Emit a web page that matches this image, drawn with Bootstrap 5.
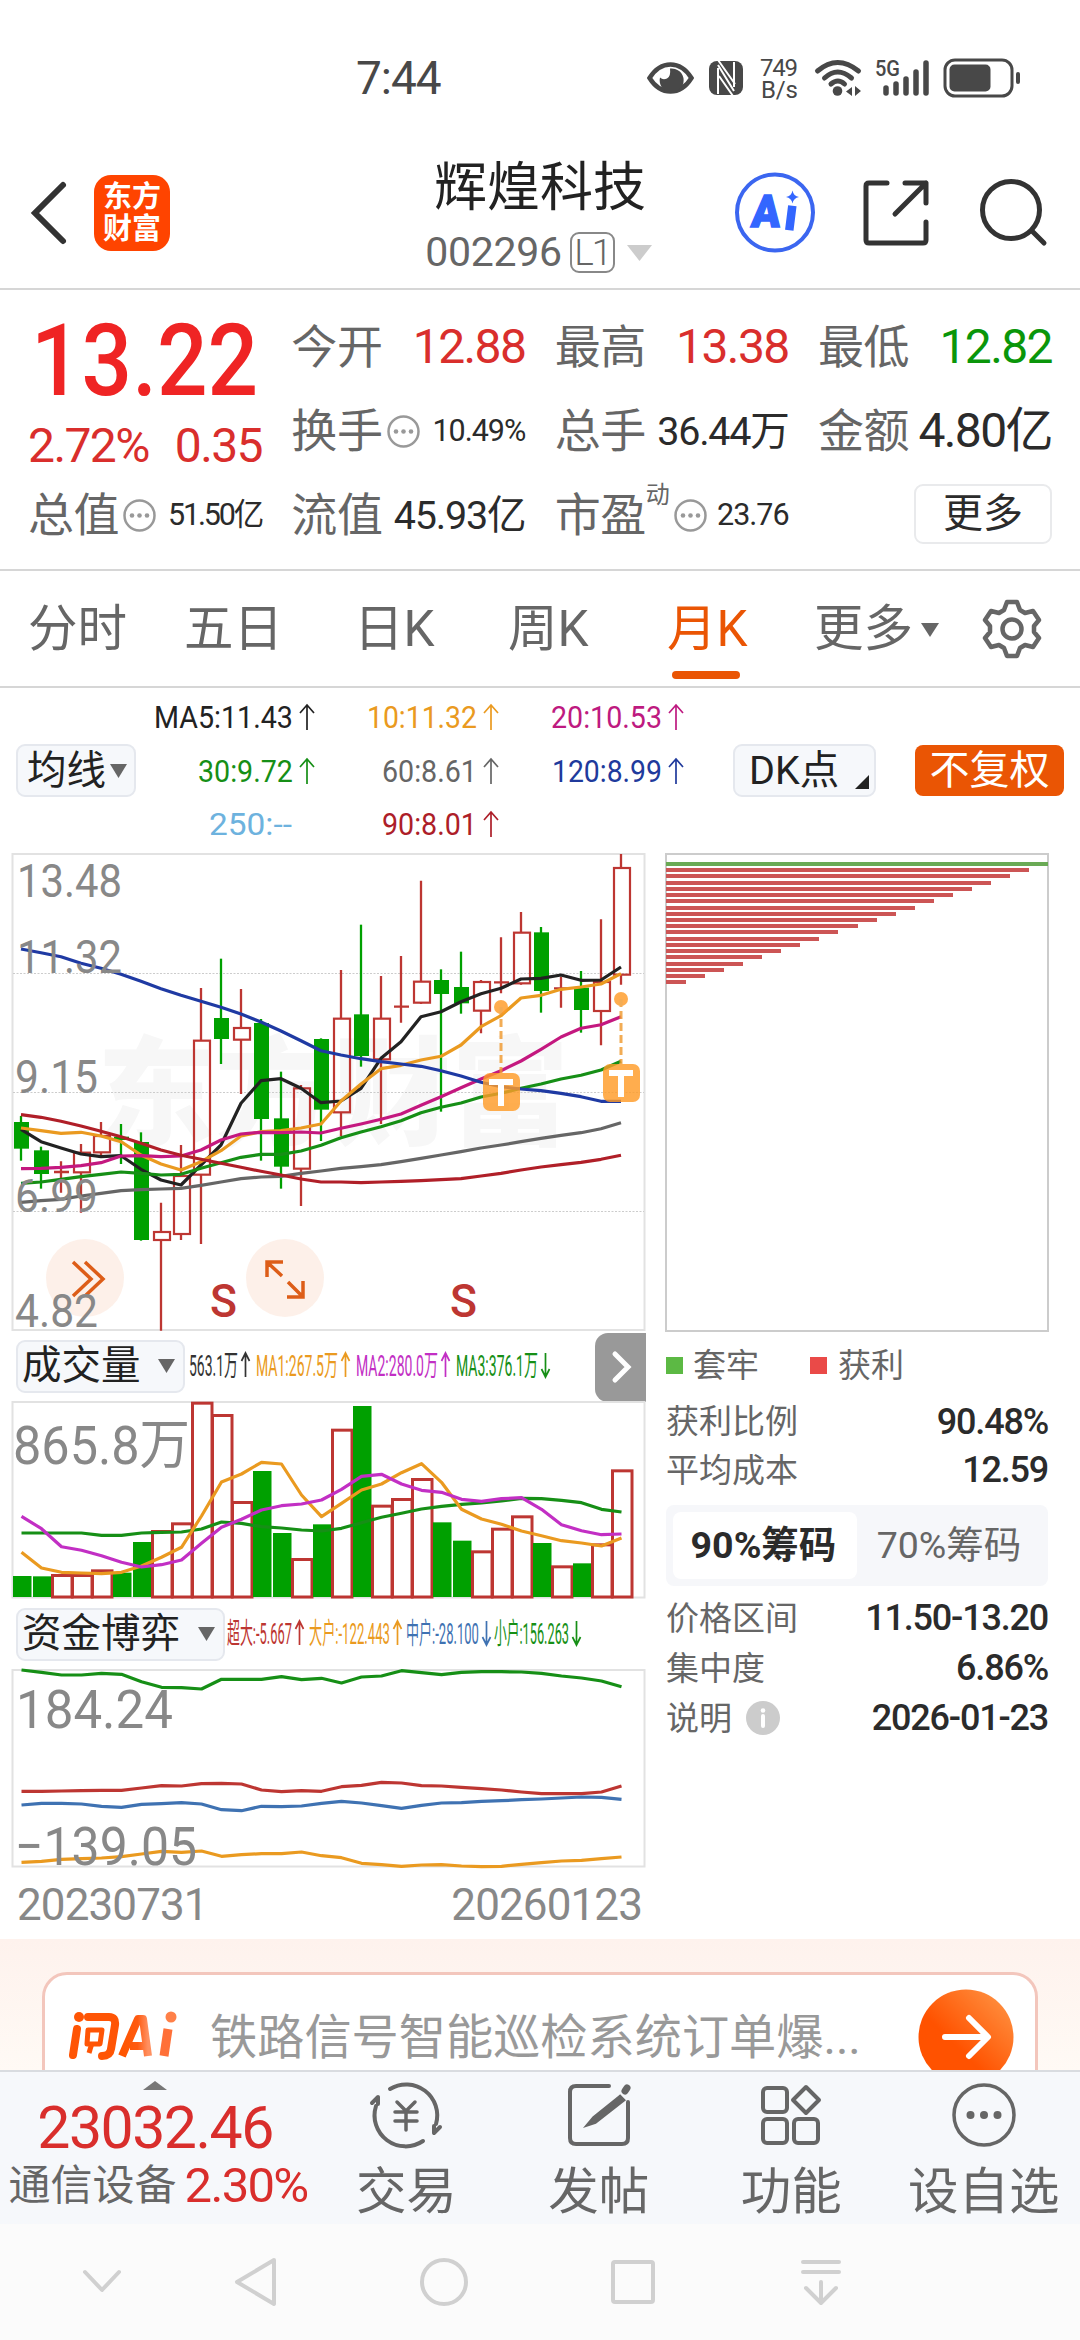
<!DOCTYPE html>
<html lang="zh-CN">
<head>
<meta charset="utf-8">
<meta name="viewport" content="width=device-width, initial-scale=1">
<title>辉煌科技 002296</title>
<link href="https://cdn.jsdelivr.net/npm/bootstrap@5.3.0/dist/css/bootstrap.min.css" rel="stylesheet">
<style>
:root{--up:#d92e2c;--brand:#ea5504;--ink:#2b2b2b;--dim:#666;--line:#d6d6d6}
html,body{width:1080px;height:2340px;overflow:hidden}
body{font-family:Roboto,"Noto Sans CJK SC",sans-serif;color:var(--ink);background:#fff;line-height:1}
svg{display:block;flex:none;overflow:visible}
svg text{font-family:Roboto,"Noto Sans CJK SC",sans-serif}
.c-up{color:var(--up)}.c-down{color:#0a960a}.c-dim{color:var(--dim)}
.status-bar{height:130px;padding:26px 0 0 356px}
.clock{font-size:46px;letter-spacing:-1px;color:#484848;width:288px;flex:none}
.title-bar{height:160px;padding:8px 31px 0;border-bottom:2px solid var(--line)}
.app-logo{width:76px;height:76px;border-radius:17px;background:#ff4400;color:#fff;font-weight:700;font-size:29px;line-height:32px;margin-left:27px}
.stock-name{font-size:53px;color:#222}
.stock-code{font-size:41px;letter-spacing:-.3px;color:var(--dim);margin-top:17px}
.lvl{width:45px;height:41px;border:2px solid #888;border-radius:9px;font-size:37px;font-weight:300;margin-left:8px;letter-spacing:-2px}
.name-box{width:340px;padding-top:9px;margin-left:200px}
.quote{height:281px;padding:0 28px;border-bottom:2px solid var(--line)}
.q-col{width:234px;padding-top:15px}
.q-cell{height:84.2px}
.q-label{font-size:46px;letter-spacing:-.4px;color:var(--dim)}
.v47{font-size:48px;letter-spacing:-1.6px}.v39{font-size:39.5px;letter-spacing:-1.2px}.v30{font-size:30.5px;letter-spacing:-1px}
.tight{letter-spacing:-2.2px}
.v46{font-size:48px;letter-spacing:-1.6px}
.big-price{font-size:100px;font-weight:500;color:#ef2424;height:112px;padding:21px 0 0 3px}
.big-price>span{display:inline-block;transform:scaleX(.89);transform-origin:0 50%}
.q-more{width:138px;height:60px;border:2px solid #e9eaec;border-radius:9px;font-size:40px;margin-top:-3px}
.dyn{font-size:24px;margin-top:-40px}
.h-pct{height:87px}.h-cap{height:52px}
.k-tabs{height:117px;padding-left:28px;border-bottom:2px solid var(--line);font-size:49.5px;color:var(--dim)}
.k-tabs>div{height:118px;width:156px}
.k-tabs>div:nth-child(2){width:170px}.k-tabs>div:nth-child(3){width:154px}.k-tabs>div:nth-child(4){width:159px}.k-tabs>div:nth-child(5){width:147px}.k-tabs>div:nth-child(6){width:168px}
.k-tabs .on{color:var(--brand)}
.k-tabs .on::after{content:"";position:absolute;left:5px;bottom:10px;width:68px;height:8px;border-radius:4px;background:var(--brand)}
.ma-bar{height:165px;padding:0 16px}
.pill{height:53px;border:2px solid #e5e8ee;border-radius:9px;background:#f6f8fb;color:#222;font-size:39.5px;white-space:nowrap;flex:none;padding:0 8px 0 4px}
.pill-ma{width:120px;padding-left:9px}.pill-vol{width:169px}.pill-fund{width:209px}
.pill-dk{width:143px;margin-left:17px;padding-left:14px}
.corner{right:5px;bottom:6px}
.fq{width:149px;height:51px;border-radius:8px;background:#ea5504;color:#fff;font-size:40px;flex:none}
.charts{height:1086px}
.left-col{width:646px}
.head-row{height:70px;padding-left:16px}
.nxt{width:51px;height:69px;border-radius:13px 0 0 13px;background:#999;margin-top:2px}
.dates{height:72px;padding:15px 4px 0 17px;font-size:44px;letter-spacing:-.9px;color:#888}
.right-col{width:382px;margin-left:20px}
.chips{height:479px;border:2px solid #ccc;width:384px;margin-left:-1px;padding-top:7px}
.chip{height:4px;margin-bottom:2.22px;background:#cc5555;margin-left:-1px}
.chip.lose{background:#6aaa55}
.sq{width:17px;height:17px}
.sq-g{background:#5cb944;margin-right:10px}.sq-r{background:#ea4a48;margin:0 11px 0 51px}
.r-row{height:50px}.r-row.first{height:47px}.r-legend{height:66px}
.r-label{font-size:33px;color:var(--dim)}
.r-val{font-size:36px;font-weight:500;letter-spacing:-1.2px}
.seg{height:81px;background:#f6f7fa;border-radius:8px;padding:7px;font-size:37.5px;margin:10px 0 7px}
.seg>div{height:67px;border-radius:8px}
.seg-on{width:184px;padding-right:3px}
.ask{height:131px;background:linear-gradient(#fef2ed,#fffaf5);padding:33px 42px 0}
.ask-box{height:160px;border:3px solid #f3c6bc;border-radius:25px;background:#fff}
.ask-logo{margin:33px 0 0 21px}
.ask-text{font-size:47.2px;color:#999;padding-top:40px;margin-left:30px;width:704px;white-space:nowrap}
.ask-go{margin:14px 0 0 4px}
.tool-bar{height:154px;border-top:2px solid #d9dce0;background:#f6f8fb;font-size:50.5px;color:var(--dim)}
.idx{width:311px}.idx-tri{margin-top:9px}
.idx-v{font-size:59px;letter-spacing:-1.5px;margin-top:8px}.idx-n{font-size:42px;margin-top:4px;padding-left:6px}.idx-p{font-size:49px;letter-spacing:-1.7px}
.tool{width:193px}.tool>svg{margin:9px 0 18px}
.sys-nav{height:116px;background:#fbfbfb}
</style>
</head>
<body>
<div class="status-bar d-flex align-items-center">
  <div class="clock">7:44</div>
  <svg width="380" height="48" viewBox="644 54 380 48" fill="#484848">
    <path d="M649.500 78Q658 64.500 670.500 64.500Q683 64.500 691.500 78Q683 91.500 670.500 91.500Q658 91.500 649.500 78Z" fill="none" stroke="#484848" stroke-width="4.500"/>
    <path d="M670 68.500a12 12 0 1 1-10 9q3 3 7 1t3-10Z"/>
    <rect x="709" y="61" width="34" height="34" rx="8"/>
    <path d="M718 94V68M718 65 734 91M734 62V87M719 76 733 96M718 60 735 84" fill="none" stroke="#fff" stroke-width="2"/>
    <text x="760" y="76" font-size="24" textLength="38">749</text>
    <text x="761" y="98" font-size="24" textLength="37">B/s</text>
    <g fill="none" stroke="#484848" stroke-width="5" stroke-linecap="round"><path d="M817.500 71q20-17 41 0"/><path d="M824.500 78q13-12 27 0"/><path d="M831 84q7-6 13.500 0"/></g>
    <circle cx="837.500" cy="91" r="4.800"/><path d="M852 87v9l-6-4.500ZM855 86v10l6-5Z"/>
    <text x="875" y="76" font-size="22" font-weight="500" textLength="25" lengthAdjust="spacingAndGlyphs">5G</text>
    <path d="M886 88v5M896 84v9M906 79v14M916 72v21M926 63v30" stroke="#484848" stroke-width="5.500" stroke-linecap="round"/>
    <rect x="945" y="60" width="67" height="36" rx="10" fill="none" stroke="#484848" stroke-width="3"/>
    <rect x="949.500" y="64.500" width="41" height="27" rx="5"/><rect x="1016" y="72" width="4" height="12" rx="2"/>
  </svg>
</div>

<header class="title-bar d-flex align-items-center">
  <svg width="36" height="62" viewBox="0 0 36 62"><path d="M32 3 4 31 32 59" fill="none" stroke="#333" stroke-width="6" stroke-linecap="round"/></svg>
  <div class="app-logo d-flex flex-column align-items-center justify-content-center"><span>东方</span><span>财富</span></div>
  <div class="name-box d-flex flex-column align-items-center">
    <div class="stock-name">辉煌科技</div>
    <div class="stock-code d-flex align-items-center"><span>002296</span><span class="lvl d-flex align-items-center justify-content-center">L1</span>
      <svg class="ms-2" width="32" height="18"><path d="M4 1h25L16.500 17Z" fill="#ccc"/></svg></div>
  </div>
  <svg class="ms-auto" width="320" height="90" viewBox="729 169 320 90">
    <circle cx="775" cy="213.500" r="38" fill="none" stroke="#3b66f0" stroke-width="4"/>
    <text transform="translate(750.500 227.500) skewX(-5) scale(.94 1)" x="0" y="0" font-size="45" font-weight="900" fill="#3366ff" stroke="#3366ff" stroke-width="1.500">A</text>
    <path d="M791.800 211l-2 16" stroke="#3366ff" stroke-width="8.500" stroke-linecap="square"/>
    <path d="M792.500 191.500q1 5.500 6.500 6.500-5.500 1-6.500 6.500-1-5.500-6.500-6.500 5.500-1 6.500-6.500Z" fill="#3366ff"/>
    <g fill="none" stroke="#333" stroke-width="5" stroke-linecap="round" stroke-linejoin="round"><path d="M887 184H869Q866 184 866 187V241Q866 244 869 244H923Q926 244 926 241V223M905 184H926V204M926 184 895 215"/><circle cx="1011" cy="211" r="28.500"/><path d="M1032 232 1044 244"/></g>
  </svg>
</header>

<section class="quote d-flex justify-content-between">
  <div class="q-col pt-0">
    <div class="big-price"><span>13.22</span></div>
    <div class="h-pct d-flex justify-content-between align-items-center c-up v47"><span>2.72%</span><span>0.35</span></div>
    <div class="h-cap d-flex align-items-center"><span class="q-label">总值</span><svg class="me-auto ms-1" width="33" height="33"><use href="#dots"/></svg><span class="v30 tight">51.50亿</span></div>
  </div>
  <div class="q-col">
    <div class="q-cell d-flex align-items-center justify-content-between"><span class="q-label">今开</span><span class="v47 c-up">12.88</span></div>
    <div class="q-cell d-flex align-items-center"><span class="q-label">换手</span><svg class="me-auto ms-1" width="33" height="33"><use href="#dots"/></svg><span class="v30">10.49%</span></div>
    <div class="q-cell d-flex align-items-center justify-content-between"><span class="q-label">流值</span><span class="v39">45.93亿</span></div>
  </div>
  <div class="q-col">
    <div class="q-cell d-flex align-items-center justify-content-between"><span class="q-label">最高</span><span class="v47 c-up">13.38</span></div>
    <div class="q-cell d-flex align-items-center justify-content-between"><span class="q-label">总手</span><span class="v39">36.44万</span></div>
    <div class="q-cell d-flex align-items-center"><span class="q-label">市盈</span><span class="dyn c-dim">动</span><svg class="me-auto ms-1" width="33" height="33"><use href="#dots"/></svg><span class="v30">23.76</span></div>
  </div>
  <div class="q-col">
    <div class="q-cell d-flex align-items-center justify-content-between"><span class="q-label">最低</span><span class="v47 c-down">12.82</span></div>
    <div class="q-cell d-flex align-items-center justify-content-between"><span class="q-label">金额</span><span class="v46">4.80亿</span></div>
    <div class="q-cell d-flex align-items-center justify-content-end"><div class="q-more d-flex align-items-center justify-content-center">更多</div></div>
  </div>
</section>

<nav class="k-tabs d-flex">
  <div class="d-flex align-items-center">分时</div><div class="d-flex align-items-center">五日</div><div class="d-flex align-items-center">日K</div><div class="d-flex align-items-center">周K</div>
  <div class="on d-flex align-items-center position-relative">月K</div>
  <div class="d-flex align-items-center">更多<svg class="ms-2" width="18" height="14"><path d="M0 0h18L9 14Z" fill="#666"/></svg></div>
  <svg class="align-self-center" width="60" height="60" viewBox="-30 -30 60 60"><g fill="none" stroke="#666" stroke-width="4.500" stroke-linejoin="round"><path d="M-5-27H5L8-19 13-16 21-18 27-9 22-3V3L27 9 21 18 13 16 8 19 5 27H-5L-8 19-13 16-21 18-27 9-22 3V-3L-27-9-21-18-13-16-8-19Z"/><circle r="9.500"/></g></svg>
</nav>

<section class="ma-bar d-flex align-items-center">
  <div class="pill pill-ma d-flex align-items-center">均线<svg class="ms-1" width="17" height="14"><path d="M0 0h17L8.500 14Z" fill="#666"/></svg></div>
  <svg width="580" height="165" viewBox="136 688 580 165" id="maText"></svg>
  <div class="pill pill-dk d-flex align-items-center position-relative">DK点<svg class="corner position-absolute" width="14" height="14"><path d="M14 0V14H0Z" fill="#222"/></svg></div>
  <div class="fq d-flex align-items-center justify-content-center ms-auto">不复权</div>
</section>

<section class="charts d-flex">
  <div class="left-col">
    <svg id="kline" width="646" height="478" viewBox="0 853 646 478"></svg>
    <div class="head-row d-flex align-items-center">
      <div class="pill pill-vol d-flex align-items-center justify-content-between">成交量<svg width="17" height="14"><path d="M0 0h17L8.500 14Z" fill="#666"/></svg></div>
      <svg id="volText" width="400" height="60" viewBox="185 1336 400 60"></svg>
      <div class="nxt ms-auto d-flex align-items-center justify-content-center"><svg width="18" height="32"><path d="M3 3 16 16 3 29" fill="none" stroke="#fff" stroke-width="5" stroke-linecap="round"/></svg></div>
    </div>
    <svg id="vol" width="646" height="198" viewBox="0 1401 646 198"></svg>
    <div class="head-row d-flex align-items-center">
      <div class="pill pill-fund d-flex align-items-center justify-content-between">资金博弈<svg width="17" height="14"><path d="M0 0h17L8.500 14Z" fill="#666"/></svg></div>
      <svg id="fundText" width="400" height="60" viewBox="225 1604 400 60"></svg>
    </div>
    <svg id="fund" width="646" height="199" viewBox="0 1668 646 199"></svg>
    <div class="dates d-flex justify-content-between"><span>20230731</span><span>20260123</span></div>
  </div>
  <div class="right-col">
    <div class="chips" id="chips"></div>
    <div class="r-legend d-flex align-items-center r-label"><span class="sq sq-g"></span><span>套牢</span><span class="sq sq-r"></span><span>获利</span></div>
    <div class="r-row first d-flex align-items-center justify-content-between"><span class="r-label">获利比例</span><span class="r-val">90.48%</span></div>
    <div class="r-row d-flex align-items-center justify-content-between"><span class="r-label">平均成本</span><span class="r-val">12.59</span></div>
    <div class="seg d-flex"><div class="seg-on bg-white fw-bold d-flex align-items-center justify-content-center">90%筹码</div><div class="flex-fill c-dim d-flex align-items-center justify-content-center">70%筹码</div></div>
    <div class="r-row d-flex align-items-center justify-content-between"><span class="r-label">价格区间</span><span class="r-val">11.50-13.20</span></div>
    <div class="r-row d-flex align-items-center justify-content-between"><span class="r-label">集中度</span><span class="r-val">6.86%</span></div>
    <div class="r-row d-flex align-items-center"><span class="r-label">说明</span><svg class="ms-2 ps-1" width="40" height="34"><circle cx="19" cy="17" r="17" fill="#ccc"/><path d="M19 15v10" stroke="#fff" stroke-width="4" stroke-linecap="round"/><circle cx="19" cy="9.500" r="2.300" fill="#fff"/></svg><span class="r-val ms-auto">2026-01-23</span></div>
  </div>
</section>

<section class="ask overflow-hidden">
  <div class="ask-box d-flex">
    <svg class="ask-logo" width="114" height="56" viewBox="66 2009 114 56">
      <defs><linearGradient id="og" x1="0" x2="1"><stop offset="0" stop-color="#ff5500"/><stop offset=".6" stop-color="#ff5a10"/><stop offset="1" stop-color="#ff9060"/></linearGradient>
      <linearGradient id="oc" x1="0" y1="1" x2="1" y2="0"><stop offset=".4" stop-color="#ff5200"/><stop offset="1" stop-color="#ff9a4a"/></linearGradient></defs>
      <g fill="none" stroke="#ff5505" stroke-width="8" stroke-linecap="round" stroke-linejoin="round"><path d="M77 2030 73 2056M88 2018h21q7 0 6 8l-4 24q-1 7-9 7" /><path d="M88 2031h14l-2 14h-13Z" stroke-width="5"/></g>
      <circle cx="79" cy="2018" r="5" fill="#ff5505"/><path d="M92 2044l-3 10" stroke="#ff5505" stroke-width="5"/>
      <path d="M122 2057 138 2020h5l5 37M130 2047h16" fill="none" stroke="url(#og)" stroke-width="8" stroke-linejoin="round"/>
      <path d="M168 2030 164 2057" stroke="#ff7038" stroke-width="9"/><circle cx="171" cy="2018" r="5.500" fill="#ff8048"/>
    </svg>
    <div class="ask-text">铁路信号智能巡检系统订单爆...</div>
    <svg class="ask-go" width="96" height="96"><circle cx="48" cy="48" r="47.500" fill="url(#oc)"/><path d="M27 48H69M51 29 70 48 51 67" fill="none" stroke="#fff" stroke-width="6" stroke-linecap="round" stroke-linejoin="round"/></svg>
  </div>
</section>

<section class="tool-bar d-flex">
  <div class="idx d-flex flex-column align-items-center">
    <svg class="idx-tri" width="24" height="9"><path d="M0 9 12 0 24 9Z" fill="#777"/></svg>
    <div class="c-up idx-v">23032.46</div>
    <div class="idx-n d-flex align-items-center"><span>通信设备</span><span class="c-up ms-2 idx-p">2.30%</span></div>
  </div>
  <div class="tool d-flex flex-column align-items-center"><svg width="76" height="68" viewBox="-38 -34 76 68"><g fill="none" stroke="#666" stroke-width="4" stroke-linecap="round" stroke-linejoin="round"><path d="M-16-26A31 31 0 0 1 30 9M34 12 28 18 28 11M17 26A31 31 0 0 1-30-9M-34-12-28-18-28-11"/><path d="M-9-13 0-4 9-13M0-4V15M-11-3H11M-11 6H11" stroke-width="3.500"/></g></svg>交易</div>
  <div class="tool d-flex flex-column align-items-center"><svg width="68" height="68" viewBox="-34 -34 68 68"><path d="M10-29H-23Q-29-29-29-23V23Q-29 29-23 29H23Q29 29 29 23V-13" fill="none" stroke="#666" stroke-width="4" stroke-linecap="round"/><path d="M21-18-5 3-10 9-4 7 24-15Z" fill="#666" stroke="#666" stroke-width="4"/><path d="M26-24 28-27" stroke="#666" stroke-width="7" stroke-linecap="round"/></svg>发帖</div>
  <div class="tool d-flex flex-column align-items-center"><svg width="68" height="68" viewBox="-34 -34 68 68"><g fill="none" stroke="#666" stroke-width="4"><rect x="-28" y="-27" width="24" height="24" rx="4"/><rect x="-28" y="4" width="24" height="24" rx="4"/><rect x="3" y="4" width="24" height="24" rx="4"/><path d="M15-28 28-15 15-2 2-15Z" stroke-linejoin="round"/></g></svg>功能</div>
  <div class="tool d-flex flex-column align-items-center"><svg width="68" height="68" viewBox="-34 -34 68 68"><circle r="30" fill="none" stroke="#666" stroke-width="3.500"/><g fill="#666"><circle cx="-13.500" r="4"/><circle r="4"/><circle cx="13.500" r="4"/></g></svg>设自选</div>
</section>

<nav class="sys-nav">
  <svg width="1080" height="116" viewBox="0 2224 1080 116"><g fill="none" stroke="#d0d0d0" stroke-width="4" stroke-linecap="round" stroke-linejoin="round"><path d="M85 2272 102 2290 119 2272M274 2260 237 2282 274 2304Z"/><circle cx="444" cy="2282" r="22"/><rect x="613" y="2262" width="40" height="40" rx="2"/><path d="M803 2262H839M803 2272H839M821 2282V2302M806 2288 821 2303 836 2288"/></g></svg>
</nav>

<svg width="0" height="0" class="position-absolute"><defs><g id="dots"><circle cx="16.500" cy="16.500" r="15" fill="none" stroke="#999" stroke-width="2.500"/><g fill="#999"><circle cx="9" cy="16.500" r="2.300"/><circle cx="16.500" cy="16.500" r="2.300"/><circle cx="24" cy="16.500" r="2.300"/></g></g></defs></svg>

<script>
const R='#bd3632',G='#00a000',OR='#ea9a20',GL='#168f16',PU='#c22fc4';
// a label scaled horizontally to run from x1 to x2
const tx=(s,x1,x2,y,size,fill,extra='')=>`<text data-x="${x1}" data-y="${y}" data-w="${x2-x1}" font-size="${size}" fill="${fill}" ${extra}>${s}</text>`;
const arrow=(x,y,h,dir,c,w=5)=>{const t=dir>0?y:y+h,b=dir>0?y+h:y,k=dir*8;return `<path d="M${x} ${t}V${b}M${x-w} ${t+k}L${x} ${t}L${x+w} ${t+k}" fill="none" stroke="${c}" stroke-width="1.700"/>`};
const curve=(ys,base,x0,c,w=3.2)=>`<polyline fill="none" stroke="${c}" stroke-width="${w}" stroke-linejoin="round" points="${ys.map((v,i)=>(x0+20*i)+','+(base+v/3).toFixed(1)).join(' ')}"/>`;
const put=(id,h)=>{const e=document.getElementById(id);e.innerHTML=h;
 e.querySelectorAll('text[data-w]').forEach(t=>{const d=t.dataset;t.setAttribute('transform',`translate(${d.x} ${d.y}) scale(${(d.w/t.getComputedTextLength()).toFixed(4)} 1)`)})};

put('maText',[['MA5:11.43',154,293,728,'#222'],['10:11.32',367,477,728,OR],['20:10.53',551,662,728,'#be1a80'],
['30:9.72',198,293,782,GL],['60:8.61',382,477,782,'#666'],['120:8.99',552,662,782,'#203a9c'],['250:--',209,292,835,'#6db2de'],['90:8.01',382,477,835,'#ad1e29']]
.map(a=>tx(a[0],a[1],a[2],a[3],31,a[4])+(a[0]=='250:--'?'':arrow(a[2]+14,a[3]-23,25,1,a[4],7))).join(''));

const K=[['g',828,846,926,962],['g',920,931,1002,1046],['r',964,995,997,1058],['r',912,938,997,1118],['r',846,888,937,950],['g',852,890,900,972],['g',877,906,1200,1202],['r',1088,1176,1200,1472],['r',915,1008,1182,1200],['r',444,602,1004,1212],['g',356,534,597,672],['r',447,564,599,762],['g',537,549,837,962],['g',695,835,980,1046],['r',735,745,986,1098],['g',595,597,809,903],['r',390,536,817,888],['g',254,523,648,680],['r',408,536,658,852],['r',348,499,501,548],['r',122,425,488,492],['g',388,420,462,815],['g',335,441,490,521],['r',420,426,512,580],['r',292,425,429,460],['r',216,278,430,434],['g',261,277,453,518],['r',410,440,450,503],['g',393,443,510,578],['r',238,426,513,616],['r',42,84,404,434]];
let s='<rect x="12.500" y="854" width="632" height="476" fill="#fff" stroke="#e2e2e2" stroke-width="2"/>';
s+='<text x="97" y="1136" font-size="118" font-weight="900" fill="#f7f7f7">东方财富</text>';
for(const y of [973.5,1092.5,1211.5]) s+=`<path d="M13 ${y}H644" stroke="#ccc" stroke-dasharray="2 1.500"/>`;
K.forEach(([c,h,t,b,l],i)=>{const x=21+20*i,f=v=>840+v/3,col=c=='g'?G:R;
 if(c=='g') s+=`<path d="M${x} ${f(h)}V${f(l)}" stroke="${col}" stroke-width="2.300"/><rect x="${x-7}" y="${f(t)}" width="15" height="${(b-t)/3}" fill="${col}"/>`;
 else if(b-t<15) s+=`<path d="M${x} ${f(h)}V${f(l)}M${x-7} ${f((t+b)/2)}H${x+8}" stroke="${col}" stroke-width="2.300"/>`;
 else s+=`<path d="M${x} ${f(h)}V${f(t)}M${x} ${f(b)}V${f(l)}" stroke="${col}" stroke-width="2.300"/><rect x="${x-7}" y="${f(t)}" width="16" height="${(b-t)/3}" fill="none" stroke="${col}" stroke-width="2.200"/>`;
});
s+=curve([1087,1082,1078,1068,1060,1052,1049,1047,1045,1036,1026,1016,1011,1009,1000,993,985,980,974,965,955,945,935,924,915,905,895,886,878,866,848],840,21,'#666');
s+=curve([868,905,924,942,950,947,988,1020,1035,975,915,790,722,716,745,788,783,745,655,605,530,515,485,461,445,417,415,405,421,420,381],840,21,'#222');
s+=curve([864,872,880,877,888,905,945,972,990,965,932,888,875,872,864,852,783,732,686,676,660,649,615,560,527,474,466,448,441,432,401],840,21,OR);
s+=curve([986,985,982,977,968,948,947,950,948,930,900,882,877,878,876,879,865,852,838,822,796,770,743,717,692,663,628,591,565,554,530],840,21,'#c4187f');
s+=curve([1030,1026,1018,1010,1003,996,1000,1005,1003,985,968,952,943,943,933,916,893,876,860,842,818,802,789,771,760,745,732,717,706,690,664],840,21,GL);
s+=curve([327,338,350,370,385,403,424,446,466,484,502,522,546,573,602,632,645,656,665,672,679,692,708,727,740,747,752,760,770,784,784],840,21,'#1f3aa3');
s+=curve([824,832,844,858,874,890,910,930,946,958,970,982,994,1005,1017,1026,1026,1028,1026,1024,1022,1019,1016,1008,1000,990,981,974,967,958,946],840,21,'#b01f28');
for(const x of [85,285]) s+=`<circle cx="${x}" cy="1278" r="39" fill="#fdefe8" fill-opacity=".95"/>`;
s+='<g fill="none" stroke="#dd5d18" stroke-width="3.500"><path d="M73 1262 91 1279 73 1296M85 1262 103 1279 85 1296"/><path d="M267 1277V1262H283M267 1262 282 1276M303 1281V1297H287M303 1297 288 1282"/></g>';
[['13.48',17,122,897],['11.32',17,122,973],['9.15',15,98,1093],['6.99',15,98,1212],['4.82',15,98,1327]].forEach(a=>s+=tx(...a,46,'#888'));
for(const x of [210,450]) s+=tx('S',x,x+27,1317,47,R,'font-weight="500"');
[[501,1007,1073],[621,999,1064]].forEach(([x,y,b])=>s+=`<g opacity=".82"><circle cx="${x}" cy="${y}" r="7" fill="#ff9c28"/><path d="M${x} ${y}V${b}" stroke="#f09a30" stroke-width="3" stroke-dasharray="8 4"/><rect x="${x-18}" y="${b}" width="37" height="38" rx="7" fill="#ff9c28"/></g><path d="M${x-12} ${b+9}H${x+12}M${x} ${b+9}V${b+33}" stroke="#fff" stroke-width="6"/>`);
put('kline',s);

const V='g738 g739 r732 r732 r718 g728 g636 r600 r577 r215 r252 r513 g423 g609 r684 g583 r296 g228 r524 r504 r444 g577 g632 r661 r593 r556 g639 r706 g700 r640 r418'.split(' ');
s='<rect x="12.500" y="1402" width="632" height="195.500" fill="#fff" stroke="#e2e2e2" stroke-width="2"/>'+tx('865.8万',13,190,1464,54,'#888');
V.forEach((v,i)=>{const t=1330+v.slice(1)/3,x=13+20*i;
 s+=v[0]=='g'?`<rect x="${x}" y="${t}" width="18.500" height="${1597-t}" fill="${G}"/>`:`<rect x="${x-.5}" y="${t+1.5}" width="19.500" height="${1595.5-t}" fill="#fff" stroke="${R}" stroke-width="3"/>`});
s+=curve([609,609,609,609,616,616,609,607,606,597,576,580,590,594,600,603,595,578,562,550,537,529,523,519,513,505,506,511,518,538,546],1330,21.5,GL);
s+=curve([667,714,727,729,731,727,708,682,652,558,456,432,397,402,495,560,520,480,462,428,401,457,538,567,583,603,617,632,639,648,624],1330,21.5,OR);
s+=curve([559,596,650,661,677,697,711,704,690,640,592,568,540,527,522,510,478,439,433,462,481,487,508,514,506,503,538,584,602,614,612],1330,21.5,PU);
put('vol',s);
put('volText',[['563.1万',189,238,'#333',1],['MA1:267.5万',256,338,OR,1],['MA2:280.0万',356,438,PU,1],['MA3:376.1万',456,538,GL,-1]]
.map(a=>tx(a[0],a[1],a[2],1376,29,a[3])+arrow(a[2]+7.5,1353,24,a[4],a[3],4)).join(''));

s='<rect x="12.500" y="1669" width="632" height="196.500" fill="#fff" stroke="#e2e2e2" stroke-width="2"/>';
s+=curve([207,214,222,222,217,220,242,259,260,264,235,235,235,227,236,232,246,228,225,209,215,221,214,212,212,213,217,225,231,240,257],1600,21.5,GL);
s+=curve([571,571,570,569,568,568,561,554,555,548,547,549,567,572,569,571,557,553,544,546,554,555,559,563,567,573,578,578,578,573,555],1600,21.5,R);
s+=curve([612,607,607,609,616,619,610,608,605,609,626,629,616,617,615,607,601,606,614,622,613,606,605,601,599,596,594,591,588,589,595],1600,21.5,'#3f72b2');
s+=curve([784,781,775,773,771,767,759,751,754,750,766,761,758,758,753,764,770,787,791,796,792,791,795,797,796,790,785,780,778,773,768],1600,21.5,OR);
s+=tx('184.24',16,173,1727,54,'#888')+tx('−139.05',15,197,1864,54,'#888');
put('fund',s);
put('fundText',[['超大:-5.667',227,292,R,1],['大户:-122.443',309,390,OR,1],['中户:-28.100',406,479,'#3f72b2',-1],['小户:156.263',494,569,GL,-1]]
.map(a=>tx(a[0],a[1],a[2],1644,29,a[3])+arrow(a[2]+7.5,1621,24,a[4],a[3],4)).join(''));

document.getElementById('chips').innerHTML=Array.from({length:20},(_,k)=>`<div class="chip ${k?'':'lose'}" style="width:${(382-19.05*k).toFixed(1)}px"></div>`).join('');
</script>
<script src="https://cdn.jsdelivr.net/npm/bootstrap@5.3.0/dist/js/bootstrap.bundle.min.js"></script>
</body>
</html>
